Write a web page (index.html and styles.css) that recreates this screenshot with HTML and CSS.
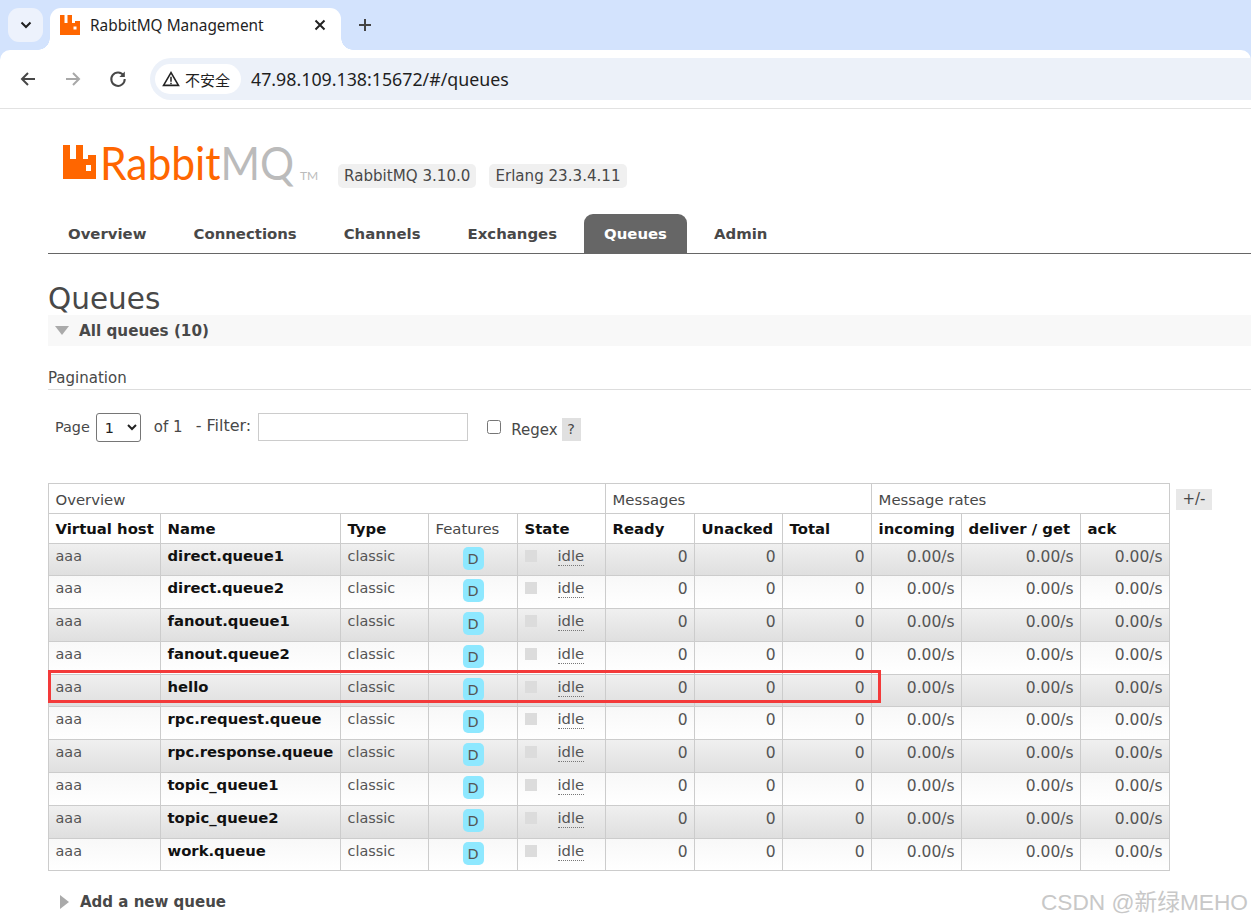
FILE: index.html
```html
<!DOCTYPE html>
<html lang="en">
<head>
<meta charset="utf-8">
<title>RabbitMQ Management</title>
<link rel="stylesheet" href="styles.css">
</head>
<body>
<div class="chrome">
<div class="tabstrip">
  <div class="tabsearch"><svg width="12" height="8" viewBox="0 0 12 8"><path d="M1.500 1.500 6 6l4.500-4.500" fill="none" stroke="#1f1f1f" stroke-width="2"/></svg></div>
  <div class="tab">
    <svg class="favicon" width="20" height="20" viewBox="0 0 20 20"><path d="M0 0h4.500v8h3V0H12v8h3V6h5v14H0z" fill="#f60"/><rect x="13.500" y="11.500" width="3" height="3" fill="#fff"/></svg>
    <span class="tabtitle">RabbitMQ Management</span>
    <svg class="tabclose" width="12" height="12" viewBox="0 0 12 12"><path d="M1.500 1.500l9 9m0-9l-9 9" stroke="#222" stroke-width="2"/></svg>
  </div>
  <svg class="newtab" width="14" height="14" viewBox="0 0 14 14"><path d="M7 1v12M1 7h12" stroke="#444" stroke-width="2"/></svg>
</div>
<div class="toolbar">
  <svg class="navicon" width="18" height="18" viewBox="0 0 18 18"><path d="M16 9H3M9 3 3 9l6 6" fill="none" stroke="#474747" stroke-width="2"/></svg>
  <svg class="navicon dim" width="18" height="18" viewBox="0 0 18 18"><path d="M2 9h13M9 3l6 6-6 6" fill="none" stroke="#a8a8a8" stroke-width="2"/></svg>
  <svg class="navicon" width="18" height="18" viewBox="0 0 18 18"><path d="M14.600 5.500A6.700 6.700 0 1 0 15.700 9" fill="none" stroke="#474747" stroke-width="2"/><path d="M15.800 1.500v5.400h-5.400z" fill="#474747"/></svg>
  <div class="omnibox">
    <div class="chip"><svg width="18" height="16" viewBox="0 0 16 15"><path d="M8 1.500 1 13.500h14z" fill="none" stroke="#222" stroke-width="1.500"/><path d="M8 5.500v4.500M8 11v1.500" stroke="#222" stroke-width="1.400"/></svg><span>不安全</span></div>
    <span class="url">47.98.109.138:15672/#/queues</span>
  </div>
</div>
</div>

<div class="page">
  <header class="masthead">
    <div class="logo">
      <svg width="33" height="34" viewBox="0 0 33 34"><path d="M0 0h7v14h6V0h7v14h5V10h8v24H0z" fill="#f60"/><rect x="23" y="20" width="5" height="6" fill="#fff"/></svg>
      <span class="logo-word"><span class="logo-r">Rabbit</span><span class="logo-m">MQ</span></span><span class="logo-tm">TM</span>
    </div>
    <span class="version">RabbitMQ 3.10.0</span>
    <span class="version">Erlang 23.3.4.11</span>
  </header>
  <nav class="tabs">
    <a class="navlink">Overview</a>
    <a class="navlink">Connections</a>
    <a class="navlink">Channels</a>
    <a class="navlink">Exchanges</a>
    <a class="navlink active">Queues</a>
    <a class="navlink">Admin</a>
  </nav>
  <h1>Queues</h1>
  <div class="section-head"><span class="tri-down"></span>All queues (10)</div>
  <h3 class="pagination">Pagination</h3>
  <div class="filters">
    <span class="lbl-page">Page</span>
    <select class="pagesel"><option>1</option></select>
    <span class="lbl-of">of 1</span>
    <span class="lbl-filter">- Filter:</span>
    <input class="filter" type="text">
    <input class="regex" type="checkbox">
    <span class="lbl-regex">Regex</span>
    <span class="help">?</span>
  </div>
  <div class="tablewrap">
    <table class="queues">
      <colgroup>
        <col class="c1"><col class="c2"><col class="c3"><col class="c4"><col class="c5"><col class="c6"><col class="c7"><col class="c8"><col class="c9"><col class="c10"><col class="c11">
      </colgroup>
      <thead>
        <tr class="group"><th colspan="5">Overview</th><th colspan="3">Messages</th><th colspan="3">Message rates</th></tr>
        <tr class="cols"><th>Virtual host</th><th>Name</th><th>Type</th><th class="plain">Features</th><th>State</th><th>Ready</th><th>Unacked</th><th>Total</th><th>incoming</th><th>deliver / get</th><th>ack</th></tr>
      </thead>
      <tbody>
        <tr class="alt1"><td>aaa</td><td class="qname">direct.queue1</td><td>classic</td><td class="ctr"><span class="badge">D</span></td><td><span class="state"><i></i><abbr>idle</abbr></span></td><td class="num">0</td><td class="num">0</td><td class="num">0</td><td class="num">0.00/s</td><td class="num">0.00/s</td><td class="num">0.00/s</td></tr>
        <tr class="alt2"><td>aaa</td><td class="qname">direct.queue2</td><td>classic</td><td class="ctr"><span class="badge">D</span></td><td><span class="state"><i></i><abbr>idle</abbr></span></td><td class="num">0</td><td class="num">0</td><td class="num">0</td><td class="num">0.00/s</td><td class="num">0.00/s</td><td class="num">0.00/s</td></tr>
        <tr class="alt1"><td>aaa</td><td class="qname">fanout.queue1</td><td>classic</td><td class="ctr"><span class="badge">D</span></td><td><span class="state"><i></i><abbr>idle</abbr></span></td><td class="num">0</td><td class="num">0</td><td class="num">0</td><td class="num">0.00/s</td><td class="num">0.00/s</td><td class="num">0.00/s</td></tr>
        <tr class="alt2"><td>aaa</td><td class="qname">fanout.queue2</td><td>classic</td><td class="ctr"><span class="badge">D</span></td><td><span class="state"><i></i><abbr>idle</abbr></span></td><td class="num">0</td><td class="num">0</td><td class="num">0</td><td class="num">0.00/s</td><td class="num">0.00/s</td><td class="num">0.00/s</td></tr>
        <tr class="alt1"><td>aaa</td><td class="qname">hello</td><td>classic</td><td class="ctr"><span class="badge">D</span></td><td><span class="state"><i></i><abbr>idle</abbr></span></td><td class="num">0</td><td class="num">0</td><td class="num">0</td><td class="num">0.00/s</td><td class="num">0.00/s</td><td class="num">0.00/s</td></tr>
        <tr class="alt2"><td>aaa</td><td class="qname">rpc.request.queue</td><td>classic</td><td class="ctr"><span class="badge">D</span></td><td><span class="state"><i></i><abbr>idle</abbr></span></td><td class="num">0</td><td class="num">0</td><td class="num">0</td><td class="num">0.00/s</td><td class="num">0.00/s</td><td class="num">0.00/s</td></tr>
        <tr class="alt1"><td>aaa</td><td class="qname">rpc.response.queue</td><td>classic</td><td class="ctr"><span class="badge">D</span></td><td><span class="state"><i></i><abbr>idle</abbr></span></td><td class="num">0</td><td class="num">0</td><td class="num">0</td><td class="num">0.00/s</td><td class="num">0.00/s</td><td class="num">0.00/s</td></tr>
        <tr class="alt2"><td>aaa</td><td class="qname">topic_queue1</td><td>classic</td><td class="ctr"><span class="badge">D</span></td><td><span class="state"><i></i><abbr>idle</abbr></span></td><td class="num">0</td><td class="num">0</td><td class="num">0</td><td class="num">0.00/s</td><td class="num">0.00/s</td><td class="num">0.00/s</td></tr>
        <tr class="alt1"><td>aaa</td><td class="qname">topic_queue2</td><td>classic</td><td class="ctr"><span class="badge">D</span></td><td><span class="state"><i></i><abbr>idle</abbr></span></td><td class="num">0</td><td class="num">0</td><td class="num">0</td><td class="num">0.00/s</td><td class="num">0.00/s</td><td class="num">0.00/s</td></tr>
        <tr class="alt2"><td>aaa</td><td class="qname">work.queue</td><td>classic</td><td class="ctr"><span class="badge">D</span></td><td><span class="state"><i></i><abbr>idle</abbr></span></td><td class="num">0</td><td class="num">0</td><td class="num">0</td><td class="num">0.00/s</td><td class="num">0.00/s</td><td class="num">0.00/s</td></tr>
      </tbody>
    </table>
    <span class="plusminus">+/-</span>
    <div class="highlight"></div>
  </div>
  <div class="addnew"><span class="tri-right"></span>Add a new queue</div>
</div>
<div class="watermark">CSDN @新绿MEHO</div>
</body>
</html>
```
FILE: styles.css
```css
* { box-sizing: border-box; }
html, body { margin: 0; padding: 0; height: 923px; overflow: hidden; background: #fff; }
body { position: relative; font-family: "DejaVu Sans", Verdana, sans-serif; font-size: 14px; color: #484848; }

.chrome { background: #d3e3fd; }
.tabstrip { height: 50px; display: flex; align-items: flex-start; padding: 8px 0 0 8px; }
.tabsearch { width: 35px; height: 34px; border-radius: 11px; background: #edf2fc; display: flex; align-items: center; justify-content: center; }
.tab { position: relative; width: 291px; height: 42px; margin-left: 7px; background: #fff; border-radius: 11px 11px 0 0; display: flex; align-items: center; padding: 0 0 8px 10px; font-family: "Noto Sans", sans-serif; }
.tab::before, .tab::after { content: ""; position: absolute; bottom: 0; width: 12px; height: 12px; }
.tab::before { left: -12px; background: radial-gradient(circle at 0 0, transparent 11.500px, #fff 12px); }
.tab::after { right: -12px; background: radial-gradient(circle at 100% 0, transparent 11.500px, #fff 12px); }
.favicon { width: 20px; height: 20px; margin-right: 10px; }
.tabtitle { font-size: 15.400px; color: #1f1f1f; flex: 1; white-space: nowrap; }
.tabclose { margin-right: 15px; }
.newtab { margin: 10px 0 0 17px; }

.toolbar { height: 59px; background: #fff; border-bottom: 1px solid #e2e2e2; border-radius: 10px 10px 0 0; display: flex; align-items: center; padding: 0 0 0 19px; }
.navicon { margin-right: 27px; }
.navicon:nth-child(3) { margin-right: 23px; }
.omnibox { flex: 1; height: 42px; background: #ecf1f9; border-radius: 21px 0 0 21px; display: flex; align-items: center; padding-left: 5px; }
.chip { width: 86px; height: 30px; border-radius: 15px; background: #fff; display: flex; align-items: center; gap: 5px; padding-left: 7px; font-family: "Noto Sans CJK SC", sans-serif; font-size: 15px; color: #1f1f1f; white-space: nowrap; }
.url { margin-left: 10px; font-family: "Noto Sans", sans-serif; font-size: 17.800px; color: #1f1f1f; white-space: nowrap; }

.page { padding: 0 0 0 48px; }
.masthead { height: 105px; display: flex; align-items: flex-start; padding: 36px 0 0 15px; }
.logo { display: flex; align-items: flex-start; width: 275px; height: 40px; flex: none; line-height: 1; white-space: nowrap; font-family: "Lato", sans-serif; font-weight: 400; }
.logo-word { display: block; width: 200px; margin-left: 4px; font-size: 47px; line-height: 34px; transform: scaleX(.905); transform-origin: 0 0; }
.logo-r { color: #f60; }
.logo-m { color: #bbb; }
.logo-tm { font-size: 12px; color: #bbb; margin: 25px 0 0 0; }
.version { margin-top: 19px; height: 24px; line-height: 24px; padding: 0 6px; margin-right: 13px; border-radius: 5px; background: #f0f0f0; color: #484848; font-size: 15.100px; white-space: nowrap; }

.tabs { height: 40px; width: 1203px; border-bottom: 1px solid #666; display: flex; align-items: flex-end; }
.navlink { height: 39px; line-height: 40px; padding: 0 20px; margin-right: 7px; font-weight: 700; font-size: 14.900px; color: #484848; white-space: nowrap; }
.navlink.active { background: #666; color: #fff; border-radius: 9px 9px 0 0; }

h1 { margin: 25px 0 0; height: 36px; line-height: 40px; font-weight: 400; font-size: 29.500px; color: #484848; }
.section-head { height: 31px; background: #f8f8f8; display: flex; align-items: center; padding-left: 7px; font-weight: 700; font-size: 15.200px; color: #484848; }
.tri-down { width: 0; height: 0; border: 7.500px solid transparent; border-top: 9px solid #aaa; border-bottom: 0; margin-right: 10px; }
.pagination { margin: 22px 0 0; height: 22px; line-height: 20px; border-bottom: 1px solid #ddd; font-weight: 400; font-size: 15px; color: #484848; }

.filters { height: 93px; display: flex; align-items: flex-start; padding: 23px 0 0 7px; font-size: 14.400px; }
.filters span { line-height: 28px; }
.lbl-page { margin-right: 6px; }
.pagesel { width: 45px; height: 29px; font: inherit; color: #222; background: #fff; border: 1px solid #767676; border-radius: 3px; padding-left: 4px; }
.lbl-of { margin-left: 13px; font-size: 15px; }
.lbl-filter { margin: -1px 0 0 13px; font-size: 16px; }
.filter { width: 210px; height: 28px; margin-left: 7px; border: 1px solid #ccc; background: #fff; }
.regex { width: 14px; height: 14px; margin: 7px 0 0 19px; }
.lbl-regex { margin: 3px 0 0 10px; font-size: 15px; }
.filters .help { width: 19px; height: 23px; line-height: 23px; margin: 5px 0 0 4px; background: #e0e0e0; text-align: center; }

.tablewrap { position: relative; }
.queues { border-collapse: collapse; table-layout: fixed; width: 1122px; font-size: 14.400px; }
.c1 { width: 112px; } .c2 { width: 180px; } .c3 { width: 88px; } .c4 { width: 89px; } .c5 { width: 88px; }
.c6 { width: 89px; } .c7 { width: 88px; } .c8 { width: 89px; } .c9 { width: 90px; } .c10 { width: 119px; } .c11 { width: 89px; }
.queues th, .queues td { border: 1px solid #ccc; padding: 0 6.500px; white-space: nowrap; overflow: hidden; text-align: left; }
.queues th { font-size: 14.850px; }
.group th { height: 29.500px; padding-top: 3px; font-weight: 400; color: #484848; }
.cols th { height: 30px; padding-top: 1px; color: #111; font-weight: 700; }
.cols th.plain { font-weight: 400; color: #484848; }
.queues tbody tr { height: 32.800px; }
.queues td { vertical-align: top; padding-top: 3px; line-height: 18px; color: #555; }
.alt1 { background: linear-gradient(#f0f0f0, #dfdfdf); }
.alt2 { background: linear-gradient(#f8f8f8, #fff); }
.queues td.qname { font-weight: 700; color: #111; font-size: 14.800px; }
.queues td.num { text-align: right; font-size: 15.500px; padding-top: 4px; }
.queues td.ctr { text-align: center; padding: 3px 0 0; }
.badge { display: inline-block; width: 21px; height: 23px; line-height: 25px; border-radius: 5px; background: #8ee8ff; text-align: center; color: #555; }
.state { display: flex; align-items: flex-start; }
.state i { width: 12px; height: 12px; margin: 3px 21px 0 0; background: #dcdcdc; }
.state abbr { border-bottom: 1px dotted #777; line-height: 19px; margin-top: -1px; font-size: 14.800px; }
.plusminus { position: absolute; left: 1128px; top: 6px; width: 36px; height: 21px; line-height: 21px; background: #e8e8e8; text-align: center; font-size: 15px; }
.highlight { position: absolute; left: 0; top: 187px; width: 833px; height: 33px; border: 3px solid #f33a3a; pointer-events: none; }
.addnew { display: flex; align-items: center; margin-top: 22px; padding-left: 12px; font-weight: 700; font-size: 15px; color: #484848; }
.tri-right { width: 0; height: 0; border: 7.500px solid transparent; border-left: 9px solid #aaa; border-right: 0; margin-right: 11px; }
.watermark { position: absolute; right: 3px; top: 884px; font-family: "Liberation Sans", "Noto Sans CJK SC", sans-serif; font-size: 22.700px; color: #c8c8c8; white-space: nowrap; }
```
